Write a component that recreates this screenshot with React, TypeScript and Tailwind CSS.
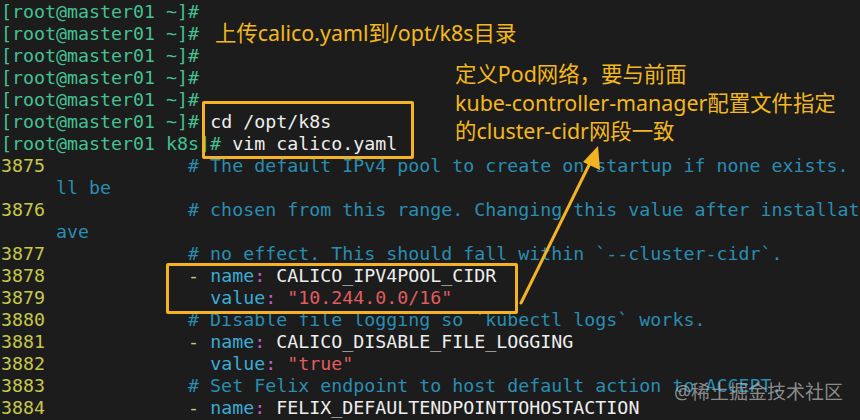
import React from 'react'

const mono = { fontFamily: '"DejaVu Sans Mono", "Liberation Mono", monospace' }

type Seg = { t: string; c: string }

const G = 'text-[#45c192]'
const W = 'text-[#eeeeee]'
const N = 'text-[#c8c84c]'
const C = 'text-[#2a8db2]'
const K = 'text-[#3cabd6]'
const P = 'text-[#c45ccc]'
const S = 'text-[#e05c5e]'
const D = 'text-[#c9c98a]'

const prompt = (dir: string, cmd = ''): Seg[] => [
  { t: `[root@master01 ${dir}]#`, c: G },
  { t: cmd ? ' ' + cmd : '', c: W },
]
const num = (n: string, rest: Seg[]): Seg[] => [{ t: n + ' ', c: N }, ...rest]
const pad = '            '
const nameRow = (n: string, v: string) =>
  num(n, [
    { t: pad, c: W },
    { t: '- ', c: D },
    { t: 'name', c: K },
    { t: ':', c: P },
    { t: ' ' + v, c: W },
  ])
const valueRow = (n: string, v: string) =>
  num(n, [
    { t: pad + '  ', c: W },
    { t: 'value', c: K },
    { t: ':', c: P },
    { t: ' ' + v, c: S },
  ])
const comment = (n: string, v: string) => num(n, [{ t: pad + v, c: C }])

const rows: Seg[][] = [
  prompt('~'),
  prompt('~'),
  prompt('~'),
  prompt('~'),
  prompt('~'),
  prompt('~', 'cd /opt/k8s'),
  prompt('k8s', 'vim calico.yaml'),
  comment('3875', '# The default IPv4 pool to create on startup if none exists. Pod IPs wi'),
  [{ t: '     ll be', c: C }],
  comment('3876', '# chosen from this range. Changing this value after installation will h'),
  [{ t: '     ave', c: C }],
  comment('3877', '# no effect. This should fall within `--cluster-cidr`.'),
  nameRow('3878', 'CALICO_IPV4POOL_CIDR'),
  valueRow('3879', '"10.244.0.0/16"'),
  comment('3880', '# Disable file logging so `kubectl logs` works.'),
  nameRow('3881', 'CALICO_DISABLE_FILE_LOGGING'),
  valueRow('3882', '"true"'),
  comment('3883', '# Set Felix endpoint to host default action to ACCEPT.'),
  nameRow('3884', 'FELIX_DEFAULTENDPOINTTOHOSTACTION'),
]

const cjk = { fontFamily: '"Noto Sans", "Noto Sans CJK SC", sans-serif' }

export default function App() {
  return (
    <div className="relative w-[860px] h-[420px] overflow-hidden bg-[#1c1c1c]">
      {/* terminal */}
      <div className="flex flex-col pt-[1px] pl-[1px] text-[18.3px]" style={mono}>
        {rows.map((r, i) => (
          <div key={i} className="h-[22px] leading-[22px] whitespace-pre overflow-hidden">
            {r.map((s, j) => (
              <span key={j} className={s.c}>
                {s.t}
              </span>
            ))}
          </div>
        ))}
      </div>

      {/* annotation boxes */}
      <div className="absolute left-[202px] top-[101px] w-[212px] h-[58px] border-[3px] border-[#f5b324] rounded-[2px]" />
      <div className="absolute left-[166px] top-[263px] w-[352px] h-[51px] border-[3px] border-[#f5b324] rounded-[2px]" />

      {/* notes */}
      <div className="absolute left-[215px] top-[18px] text-[21.4px] leading-[30px] text-[#f4b81e]" style={cjk}>
        上传calico.yaml到/opt/k8s目录
      </div>
      <div className="absolute left-[455px] top-[60px] text-[21.4px] leading-[28.5px] text-[#f4b81e]" style={cjk}>
        <div>定义Pod网络，要与前面</div>
        <div>kube-controller-manager配置文件指定</div>
        <div>的cluster-cidr网段一致</div>
      </div>

      {/* arrow */}
      <svg className="absolute inset-0 pointer-events-none" width="860" height="420">
        <line x1="521" y1="303" x2="590" y2="163" stroke="#f5b324" strokeWidth="3" strokeLinecap="round" />
        <polygon points="598,146 600,170 583,162" fill="#f5b324" />
      </svg>

      {/* watermark */}
      <div className="absolute right-[17px] top-[379px] text-[19px] leading-[26px] text-[#bdbdbd]/70" style={cjk}>
        @稀土掘金技术社区
      </div>
    </div>
  )
}
